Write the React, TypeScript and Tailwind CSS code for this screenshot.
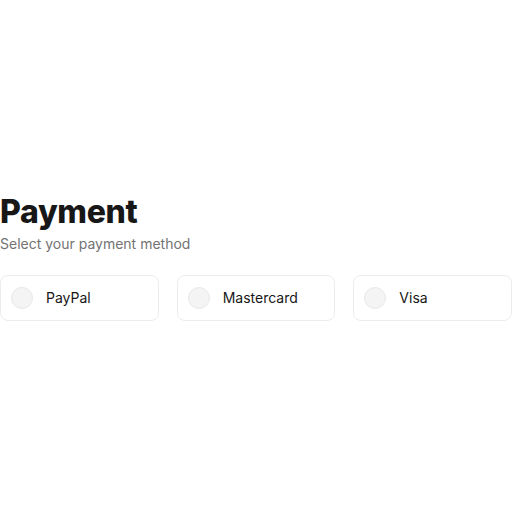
import React from 'react';

const methods = ['PayPal', 'Mastercard', 'Visa'];

const App: React.FC = () => {
  return (
    <div className="w-[512px] h-[512px] bg-white pt-[192px] font-['Inter',sans-serif]">
      <div className="flex flex-col">
        <h1 className="text-[32px] leading-[40px] font-extrabold tracking-[-0.01em] text-[#171717]">Payment</h1>
        <p className="text-sm text-[#737373] mt-[2px]">Select your payment method</p>
        <div className="grid grid-cols-3 gap-[18px] mt-[21px]">
          {methods.map((m) => (
            <label
              key={m}
              className="h-[46px] flex items-center gap-3 px-[10px] border border-[#ececec] rounded-lg bg-white"
            >
              <span className="w-[22px] h-[22px] rounded-full bg-[#f4f4f4] border border-[#e8e8e8] shrink-0"></span>
              <span className="text-sm text-[#171717] ml-px">{m}</span>
            </label>
          ))}
        </div>
      </div>
    </div>
  );
};

export default App;
